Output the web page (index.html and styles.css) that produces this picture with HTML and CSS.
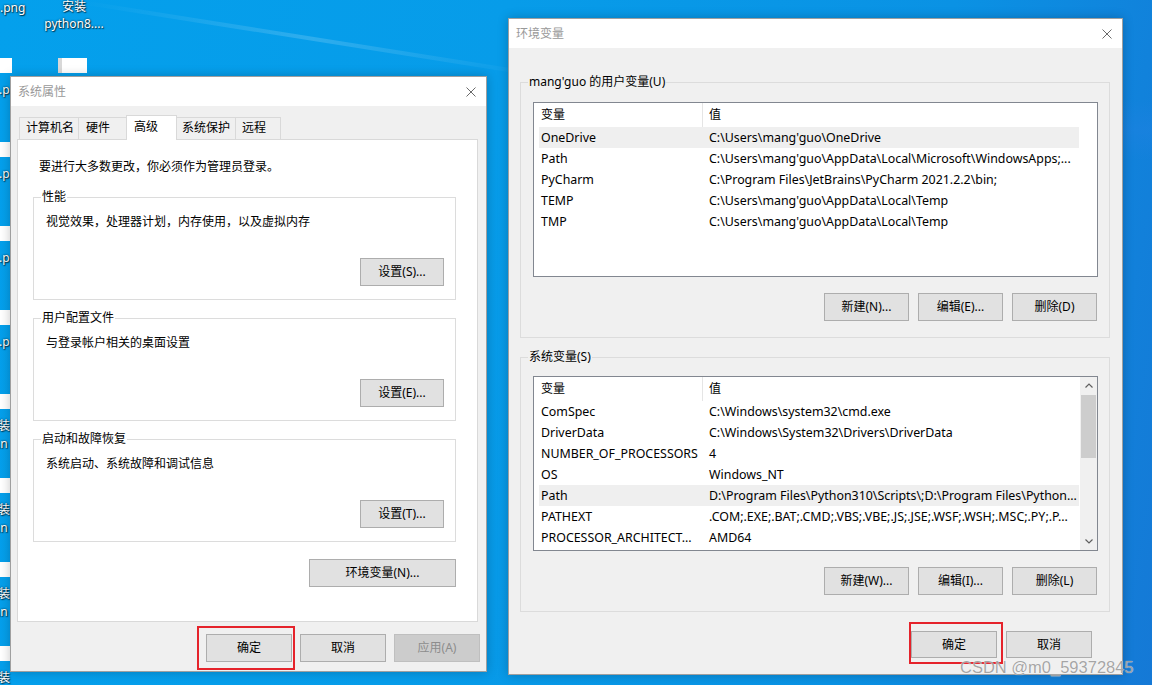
FILE: index.html
```html
<!DOCTYPE html>
<html lang="zh-CN">
<head>
<meta charset="utf-8">
<title>系统属性 / 环境变量</title>
<link rel="stylesheet" href="styles.css">
</head>
<body>
<div class="desktop">
  <div class="ray ray-a"></div>
  <div class="ray ray-b"></div>

  <div class="dlabel lbl-png">.png</div>
  <div class="dlabel lbl-install">安装<br>python8....</div>
  <div class="dimg img-b"></div>

  <div class="strip">
    <div class="strip-item"><span class="blk"></span><span class="lab">.p</span></div>
    <div class="strip-item"><span class="blk"></span><span class="lab">.p</span></div>
    <div class="strip-item"><span class="blk"></span><span class="lab">.p</span></div>
    <div class="strip-item"><span class="blk"></span><span class="lab">.p</span></div>
    <div class="strip-item"><span class="blk"></span><span class="lab lab-cjk">装<br><span class="sub">.n</span></span></div>
    <div class="strip-item"><span class="blk"></span><span class="lab lab-cjk">装<br><span class="sub">.n</span></span></div>
    <div class="strip-item"><span class="blk"></span><span class="lab lab-cjk">装<br><span class="sub">.n</span></span></div>
    <div class="strip-item"><span class="blk"></span><span class="lab lab-cjk">装</span></div>
  </div>

  <!-- 系统属性 -->
  <div class="win win-sys">
    <div class="titlebar">
      <span class="title">系统属性</span>
      <svg class="close" width="10" height="10" viewBox="0 0 10 10"><path d="M0.5 0.5L9.5 9.5M9.5 0.5L0.5 9.5" stroke="#6a6a6a" stroke-width="1" fill="none"/></svg>
    </div>
    <div class="win-body sys-body">
      <div class="tabs">
        <div class="tab t1">计算机名</div>
        <div class="tab t2">硬件</div>
        <div class="tab t3 active">高级</div>
        <div class="tab t4">系统保护</div>
        <div class="tab t5">远程</div>
      </div>
      <div class="panel">
        <p class="intro">要进行大多数更改，你必须作为管理员登录。</p>
        <div class="group sgroup">
          <span class="legend">性能</span>
          <p class="desc">视觉效果，处理器计划，内存使用，以及虚拟内存</p>
          <button class="btn btn-set">设置(S)...</button>
        </div>
        <div class="group sgroup">
          <span class="legend">用户配置文件</span>
          <p class="desc">与登录帐户相关的桌面设置</p>
          <button class="btn btn-set">设置(E)...</button>
        </div>
        <div class="group sgroup">
          <span class="legend">启动和故障恢复</span>
          <p class="desc">系统启动、系统故障和调试信息</p>
          <button class="btn btn-set">设置(T)...</button>
        </div>
        <div class="env-row">
          <button class="btn btn-env">环境变量(N)...</button>
        </div>
      </div>
      <div class="dlg-buttons sys-buttons">
        <button class="btn btn-dlg">确定</button>
        <button class="btn btn-dlg">取消</button>
        <button class="btn btn-dlg disabled">应用(A)</button>
      </div>
    </div>
  </div>

  <!-- 环境变量 -->
  <div class="win win-env">
    <div class="titlebar">
      <span class="title">环境变量</span>
      <svg class="close" width="10" height="10" viewBox="0 0 10 10"><path d="M0.5 0.5L9.5 9.5M9.5 0.5L0.5 9.5" stroke="#6a6a6a" stroke-width="1" fill="none"/></svg>
    </div>
    <div class="win-body env-body">
      <div class="group egroup">
        <span class="legend legend-gray">mang'guo 的用户变量(U)</span>
        <div class="lv">
          <div class="lv-content">
            <div class="lv-head"><div class="c1">变量</div><div class="c2">值</div></div>
            <div class="lv-row sel"><div class="c1">OneDrive</div><div class="c2">C:\Users\mang'guo\OneDrive</div></div>
            <div class="lv-row"><div class="c1">Path</div><div class="c2">C:\Users\mang'guo\AppData\Local\Microsoft\WindowsApps;...</div></div>
            <div class="lv-row"><div class="c1">PyCharm</div><div class="c2">C:\Program Files\JetBrains\PyCharm 2021.2.2\bin;</div></div>
            <div class="lv-row"><div class="c1">TEMP</div><div class="c2">C:\Users\mang'guo\AppData\Local\Temp</div></div>
            <div class="lv-row"><div class="c1">TMP</div><div class="c2">C:\Users\mang'guo\AppData\Local\Temp</div></div>
          </div>
        </div>
        <div class="grp-buttons">
          <button class="btn btn-var">新建(N)...</button>
          <button class="btn btn-var">编辑(E)...</button>
          <button class="btn btn-var">删除(D)</button>
        </div>
      </div>

      <div class="group egroup egroup2">
        <span class="legend legend-gray">系统变量(S)</span>
        <div class="lv">
          <div class="lv-content">
            <div class="lv-head"><div class="c1">变量</div><div class="c2">值</div></div>
            <div class="lv-row"><div class="c1">ComSpec</div><div class="c2">C:\Windows\system32\cmd.exe</div></div>
            <div class="lv-row"><div class="c1">DriverData</div><div class="c2">C:\Windows\System32\Drivers\DriverData</div></div>
            <div class="lv-row"><div class="c1">NUMBER_OF_PROCESSORS</div><div class="c2">4</div></div>
            <div class="lv-row"><div class="c1">OS</div><div class="c2">Windows_NT</div></div>
            <div class="lv-row sel"><div class="c1">Path</div><div class="c2">D:\Program Files\Python310\Scripts\;D:\Program Files\Python...</div></div>
            <div class="lv-row"><div class="c1">PATHEXT</div><div class="c2">.COM;.EXE;.BAT;.CMD;.VBS;.VBE;.JS;.JSE;.WSF;.WSH;.MSC;.PY;.P...</div></div>
            <div class="lv-row"><div class="c1">PROCESSOR_ARCHITECT...</div><div class="c2">AMD64</div></div>
          </div>
          <div class="vscroll">
            <div class="sb-btn"><svg width="8" height="5" viewBox="0 0 8 5"><path d="M0.5 4.5L4 1L7.5 4.5" stroke="#606060" stroke-width="1.2" fill="none"/></svg></div>
            <div class="sb-track"><div class="sb-thumb"></div></div>
            <div class="sb-btn"><svg width="8" height="5" viewBox="0 0 8 5"><path d="M0.5 0.5L4 4L7.5 0.5" stroke="#606060" stroke-width="1.2" fill="none"/></svg></div>
          </div>
        </div>
        <div class="grp-buttons">
          <button class="btn btn-var">新建(W)...</button>
          <button class="btn btn-var">编辑(I)...</button>
          <button class="btn btn-var">删除(L)</button>
        </div>
      </div>

      <div class="dlg-buttons env-buttons">
        <button class="btn btn-dlg2">确定</button>
        <button class="btn btn-dlg2">取消</button>
      </div>
    </div>
  </div>

  <div class="mark mark-sys"></div>
  <div class="mark mark-env"></div>
  <div class="watermark">CSDN @m0_59372845</div>
</div>
</body>
</html>
```

FILE: styles.css
```css
* { box-sizing: border-box; }
html, body { margin: 0; padding: 0; }
body {
  width: 1152px;
  height: 685px;
  overflow: hidden;
  font-family: "Noto Sans", "Noto Sans CJK SC", sans-serif;
  font-size: 12px;
  color: #000;
}
p { margin: 0; }

.desktop {
  position: relative;
  width: 1152px;
  height: 685px;
  overflow: hidden;
  background: linear-gradient(100deg, #04a0ec 0%, #079ce9 40%, #0a92e4 75%, #1579d6 100%);
}

.ray {
  position: absolute;
  height: 4px;
  transform-origin: left center;
  background: linear-gradient(90deg, rgba(255,255,255,0), rgba(255,255,255,0.16) 50%, rgba(255,255,255,0));
}
.ray-a { left: 80px; top: 0; width: 470px; transform: rotate(9deg); }
.ray-b { left: 1090px; top: 100px; width: 80px; height: 60px; transform: none; background: linear-gradient(180deg, rgba(20,110,210,0), rgba(30,130,225,0.5), rgba(20,110,210,0)); }

.dlabel {
  position: absolute;
  color: #fff;
  font-size: 12px;
  line-height: 17px;
  white-space: nowrap;
  text-align: center;
  text-shadow: 0 0 2px rgba(0,0,0,0.85), 1px 1px 1px rgba(0,0,0,0.6);
}
.lbl-png { left: 0; top: -1px; }
.lbl-install { left: 42px; top: -2px; width: 64px; }

.dimg { position: absolute; background: #fff; }
.img-b {
  left: 58px; top: 58px; width: 29px; height: 15px;
  background: linear-gradient(90deg, #d8d8d8 0 4px, #fff 4px);
}

.strip {
  position: absolute;
  left: 0;
  top: 58px;
  width: 12px;
  display: flex;
  flex-direction: column;
}
.strip-item {
  height: 84px;
  display: flex;
  flex-direction: column;
}
.blk { display: block; width: 12px; height: 15px; background: #fff; }
.lab {
  display: block;
  margin-top: 8px;
  margin-left: -1px;
  line-height: 18px;
  color: #fff;
  white-space: nowrap;
  text-shadow: 0 0 2px rgba(0,0,0,0.85), 1px 1px 1px rgba(0,0,0,0.6);
}
.lab-cjk { margin-left: -2px; }
.lab-cjk .sub { margin-left: -1px; }

/* windows */
.win {
  position: absolute;
  display: flex;
  flex-direction: column;
  background: #f0f0f0;
  border: 1px solid rgba(60,60,60,0.45);
  box-shadow: 0 0 10px rgba(0,0,0,0.22);
}
.win-sys { left: 10px; top: 76px; width: 477px; height: 596px; }
.win-env { left: 508px; top: 18px; width: 615px; height: 657px; }

.titlebar {
  height: 29px;
  flex: none;
  background: #fff;
  display: flex;
  align-items: center;
  justify-content: space-between;
  padding: 0 10px 0 7px;
}
.title { color: #999; font-size: 12px; line-height: 16px; }
.close { display: block; }

.win-body { flex: 1; display: flex; flex-direction: column; }

/* system properties */
.sys-body { padding: 9px 8px 0 6px; }

.tabs {
  display: flex;
  align-items: flex-end;
  height: 24px;
  padding-left: 2px;
  position: relative;
  z-index: 2;
}
.tab {
  height: 22px;
  line-height: 20px;
  padding-left: 6px;
  border: 1px solid #d9d9d9;
  border-bottom: none;
  background: #f0f0f0;
  white-space: nowrap;
}
.t1 { width: 60px; }
.t2 { width: 49px; margin-left: -1px; padding-left: 7px; }
.t3 { width: 51px; margin-left: -1px; padding-left: 7px; }
.t4 { width: 60px; margin-left: -1px; padding-left: 5px; }
.t5 { width: 46px; margin-left: -1px; padding-left: 6px; }
.tab.active {
  height: 25px;
  line-height: 22px;
  background: #fff;
  position: relative;
  top: 1px;
  z-index: 3;
}

.panel {
  height: 483px;
  flex: none;
  background: #fff;
  border: 1px solid #d9d9d9;
  padding: 19px 21px 0 15px;
}
.intro { margin-left: 6px; line-height: 16px; }

.group {
  position: relative;
  border: 1px solid #dcdcdc;
}
.legend {
  position: absolute;
  top: -9px;
  left: 7px;
  padding: 0 1px;
  line-height: 16px;
  background: #fff;
  white-space: nowrap;
}
.legend-gray { background: #f0f0f0; }

.sgroup {
  height: 103px;
  margin-top: 18px;
  padding: 16px 11px 13px 12px;
  display: flex;
  flex-direction: column;
  justify-content: space-between;
}
.sgroup:first-of-type { margin-top: 22px; }
.desc { line-height: 16px; }

.btn {
  display: flex;
  align-items: center;
  justify-content: center;
  height: 28px;
  padding: 0;
  margin: 0;
  background: #e1e1e1;
  border: 1px solid #adadad;
  border-radius: 0;
  font-family: inherit;
  font-size: 12px;
  color: #000;
  line-height: 16px;
}
.btn-set { width: 84px; align-self: flex-end; }
.env-row { display: flex; justify-content: flex-end; margin-top: 17px; }
.btn-env { width: 147px; }

.dlg-buttons { display: flex; justify-content: flex-end; }
.sys-buttons { margin-top: 12px; margin-right: -2px; gap: 8px; }
.btn-dlg { width: 86px; }
.btn.disabled { background: #cccccc; border-color: #bfbfbf; color: #8d8d8d; }

/* environment variables */
.env-body { padding: 34px 12px 0 11px; }
.egroup { padding: 19px 11px 16px 12px; }
.egroup2 { margin-top: 19px; padding-top: 18px; }

.lv {
  height: 175px;
  border: 1px solid #828790;
  background: #fff;
  display: flex;
  overflow: hidden;
}
.lv-content { flex: 1; padding-left: 5px; overflow: hidden; }
.lv-head, .lv-row { display: flex; width: 540px; white-space: nowrap; }
.lv-head { height: 24px; line-height: 24px; }
.lv-row { height: 21px; line-height: 21px; font-size: 12.4px; }
.c1 { width: 164px; flex: none; padding-left: 2px; overflow: hidden; }
.c2 { flex: 1; padding-left: 6px; overflow: hidden; }
.lv-head .c1 { border-right: 1px solid #e5e5e5; }
.lv-row.sel { background: #efefef; }

.vscroll {
  width: 17px;
  flex: none;
  display: flex;
  flex-direction: column;
  background: #f0f0f0;
}
.sb-btn {
  height: 17px;
  flex: none;
  display: flex;
  align-items: center;
  justify-content: center;
}
.sb-track { flex: 1; padding: 1px 1px 0; }
.sb-thumb { height: 63px; background: #cdcdcd; }

.grp-buttons {
  display: flex;
  justify-content: flex-end;
  gap: 9px;
  margin-top: 16px;
  margin-right: 1px;
}
.btn-var { width: 85px; }

.env-buttons { margin-top: 19px; padding-right: 18px; gap: 9px; }
.btn-dlg2 { width: 86px; height: 27px; }

/* annotations */
.mark {
  position: absolute;
  border: 2px solid #e5232b;
}
.mark-sys { left: 197px; top: 626px; width: 98px; height: 44px; }
.mark-env { left: 909px; top: 622px; width: 94px; height: 42px; }

.watermark {
  position: absolute;
  left: 960px;
  top: 657px;
  font-family: "Liberation Sans", Arial, sans-serif;
  font-size: 16.5px;
  line-height: 20px;
  color: rgba(150,150,150,0.85);
  text-shadow: 0 0 1px rgba(255,255,255,0.9);
  white-space: nowrap;
}
```
